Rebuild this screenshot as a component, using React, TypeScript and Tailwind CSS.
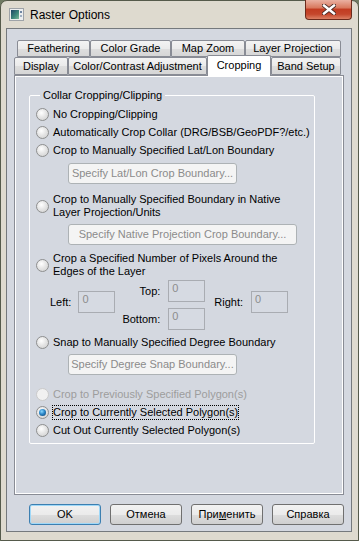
import type { ReactNode } from "react"
import clsx from "clsx"

const FONT = "font-['Liberation_Sans',Arial,sans-serif]"

function Radio({ checked, disabled }: { checked?: boolean; disabled?: boolean }) {
    return (
        <span
            className={clsx(
                "flex h-[13px] w-[13px] shrink-0 items-center justify-center rounded-full border",
                disabled
                    ? "border-[#cacaca] bg-[#f1f1f1]"
                    : "border-[#8e8f8f] bg-[radial-gradient(circle_at_40%_35%,#ffffff_0%,#e6e6e6_45%,#cdcdcd_100%)]"
            )}
        >
            {checked && (
                <span className="h-[7px] w-[7px] rounded-full bg-[radial-gradient(circle_at_40%_35%,#8ad8ff_0%,#2a86c8_45%,#0c3a66_100%)]" />
            )}
        </span>
    )
}

function RadioRow({
    children,
    checked,
    disabled,
    focused,
    className,
}: {
    children: ReactNode
    checked?: boolean
    disabled?: boolean
    focused?: boolean
    className?: string
}) {
    return (
        <div className={clsx("flex items-center gap-[3px]", className)}>
            <Radio checked={checked} disabled={disabled} />
            <span
                className={clsx(
                    "border leading-[13px]",
                    focused ? "border-dotted border-black" : "border-transparent",
                    disabled ? "text-[#9d9d9d]" : "text-black"
                )}
            >
                {children}
            </span>
        </div>
    )
}

// greyed-out "Specify ..." buttons inside the group
function SpecifyButton({ children, className }: { children: ReactNode; className?: string }) {
    return (
        <div
            className={clsx(
                "ml-[32px] flex h-[21px] items-center justify-center rounded-[3px] border border-[#adb2b5] bg-[#f4f4f4] text-[#8b8b8b]",
                className
            )}
        >
            {children}
        </div>
    )
}

function NumField() {
    return (
        <div className="h-[22px] w-[37px] border border-[#a9acb2] bg-[#d6dae2] pl-[3px] pt-px leading-[13px] text-[#8d8d8d]">
            0
        </div>
    )
}

function Tab({ label, width, selected }: { label: string; width: string; selected?: boolean }) {
    return (
        <div
            className={clsx(
                "flex shrink-0 items-center justify-center rounded-t-[2px] border border-[#898c95]",
                width,
                selected
                    ? "relative z-10 -mt-[2px] h-[21px] border-b-0 bg-white pb-[2px]"
                    : "h-full bg-[linear-gradient(#f3f3f3_0%,#ebebeb_50%,#dedede_51%,#d6d6d6_100%)]"
            )}
        >
            {label}
        </div>
    )
}

function DialogButton({ children, primary }: { children: ReactNode; primary?: boolean }) {
    return (
        <div
            className={clsx(
                "flex h-[21px] w-[72px] items-center justify-center rounded-[3px] border bg-[linear-gradient(#f2f2f2_0%,#ebebeb_50%,#dddddd_51%,#cfcfcf_100%)] text-black",
                primary ? "border-[#3c7fb1] shadow-[inset_0_0_0_1px_#9fd8f8]" : "border-[#707070]"
            )}
        >
            {children}
        </div>
    )
}

function AppIcon() {
    return (
        <svg width="15" height="13" viewBox="0 0 15 13">
            <defs>
                <linearGradient id="ri" x1="0" y1="0" x2="1" y2="1">
                    <stop offset="0" stopColor="#1d4466" />
                    <stop offset="0.6" stopColor="#3f8a7c" />
                    <stop offset="1" stopColor="#7fb89a" />
                </linearGradient>
            </defs>
            <rect x="0.5" y="0.5" width="14" height="12" fill="#eceeef" stroke="#9ea3a8" />
            <rect x="2" y="2" width="8" height="9" fill="url(#ri)" />
            <rect x="11" y="3" width="2" height="2" fill="#6f86a2" />
            <rect x="11" y="7" width="2" height="2" fill="#9fb0c2" />
        </svg>
    )
}

export default function App() {
    return (
        <div className={clsx("h-[541px] w-[359px] bg-[#6f7a62] text-[11px]", FONT)}>
            <div className="flex h-full w-full flex-col rounded-t-[7px] border border-[#555a4b] bg-[#dedacf]">
                {/* Title bar */}
                <div className="flex h-[27px] shrink-0 items-center">
                    <div className="ml-[8px]">
                        <AppIcon />
                    </div>
                    <span className="ml-[6px] text-[12px] text-black">Raster Options</span>
                    <div className="-mt-px mr-[6px] ml-auto flex h-[20px] w-[47px] items-center justify-center self-start rounded-b-[4px] border border-t-0 border-[#6b2a1c] bg-[linear-gradient(#eab1a2_0%,#d97a60_40%,#c23c22_50%,#c5472c_75%,#dc8064_100%)]">
                        <svg width="14" height="11" viewBox="0 0 14 11">
                            <path d="M2 1.5 L12 9.5 M12 1.5 L2 9.5" stroke="#4a2a24" strokeWidth="4.2" strokeLinecap="square" />
                            <path d="M2 1.5 L12 9.5 M12 1.5 L2 9.5" stroke="#ffffff" strokeWidth="2.4" strokeLinecap="square" />
                        </svg>
                    </div>
                </div>

                {/* Client area */}
                <div className="flex flex-1 flex-col pb-[8px] pl-[5px] pr-[6px]">
                    <div className="flex flex-1 flex-col border border-[#75797d] bg-[#d4d8e0] pt-[11px]">
                        <div className="ml-[7px] w-[330px]">
                            <div className="flex h-[17px] pl-[3px]">
                                <Tab label="Feathering" width="w-[73px]" />
                                <Tab label="Color Grade" width="w-[81px]" />
                                <Tab label="Map Zoom" width="w-[74px]" />
                                <Tab label="Layer Projection" width="w-[96px]" />
                            </div>
                            <div className="flex h-[18px] items-start">
                                <Tab label="Display" width="w-[54px]" />
                                <Tab label="Color/Contrast Adjustment" width="w-[139px]" />
                                <Tab label="Cropping" width="w-[64px]" selected />
                                <Tab label="Band Setup" width="w-[70px]" />
                            </div>

                            {/* Tab page */}
                            <div className="h-[420px] border border-[#898c95]">
                                <div className="h-full border border-white pl-[13px] pt-[12px]">
                                    <fieldset className="w-[286px] rounded-[2px] border border-white pb-[4px] pl-[6px]">
                                        <legend className="ml-[4px] px-[3px] leading-[13px] text-black">
                                            Collar Cropping/Clipping
                                        </legend>
                                        <div className="flex flex-col pt-[3px]">
                                            <RadioRow className="h-[18px]">No Cropping/Clipping</RadioRow>
                                            <RadioRow className="h-[18px]">
                                                Automatically Crop Collar (DRG/BSB/GeoPDF?/etc.)
                                            </RadioRow>
                                            <RadioRow className="h-[18px]">
                                                Crop to Manually Specified Lat/Lon Boundary
                                            </RadioRow>
                                            <SpecifyButton className="mt-[4px] w-[169px]">
                                                Specify Lat/Lon Crop Boundary...
                                            </SpecifyButton>

                                            <RadioRow className="mt-[8px]">
                                                Crop to Manually Specified Boundary in Native
                                                <br />
                                                Layer Projection/Units
                                            </RadioRow>
                                            <SpecifyButton className="mt-[4px] w-[229px]">
                                                Specify Native Projection Crop Boundary...
                                            </SpecifyButton>

                                            <RadioRow className="mt-[6px]">
                                                Crop a Specified Number of Pixels Around the
                                                <br />
                                                Edges of the Layer
                                            </RadioRow>

                                            {/* pixel offsets */}
                                            <div className="ml-[14px] mt-[1px] flex items-start">
                                                <div className="mt-[11px] flex items-center gap-[7px]">
                                                    <span>Left:</span>
                                                    <NumField />
                                                </div>
                                                <div className="ml-[7px] grid grid-cols-[auto_37px] items-center gap-x-[8px] gap-y-[6px]">
                                                    <span className="text-right">Top:</span>
                                                    <NumField />
                                                    <span className="text-right">Bottom:</span>
                                                    <NumField />
                                                </div>
                                                <div className="ml-[9px] mt-[11px] flex items-center gap-[8px]">
                                                    <span>Right:</span>
                                                    <NumField />
                                                </div>
                                            </div>

                                            <RadioRow className="mt-[3px] h-[18px]">
                                                Snap to Manually Specified Degree Boundary
                                            </RadioRow>
                                            <SpecifyButton className="mt-[3px] w-[169px]">
                                                Specify Degree Snap Boundary...
                                            </SpecifyButton>

                                            <RadioRow className="mt-[10px] h-[18px]" disabled>
                                                Crop to Previously Specified Polygon(s)
                                            </RadioRow>
                                            <RadioRow className="h-[18px]" checked focused>
                                                Crop to Currently Selected Polygon(s)
                                            </RadioRow>
                                            <RadioRow className="h-[18px]">Cut Out Currently Selected Polygon(s)</RadioRow>
                                        </div>
                                    </fieldset>
                                </div>
                            </div>
                        </div>

                        {/* Dialog buttons */}
                        <div className="mt-[9px] flex justify-end gap-[9px] pr-[7px]">
                            <DialogButton primary>OK</DialogButton>
                            <DialogButton>Отмена</DialogButton>
                            <DialogButton>
                                При<span className="underline">м</span>енить
                            </DialogButton>
                            <DialogButton>Справка</DialogButton>
                        </div>
                    </div>
                </div>
            </div>
        </div>
    )
}
